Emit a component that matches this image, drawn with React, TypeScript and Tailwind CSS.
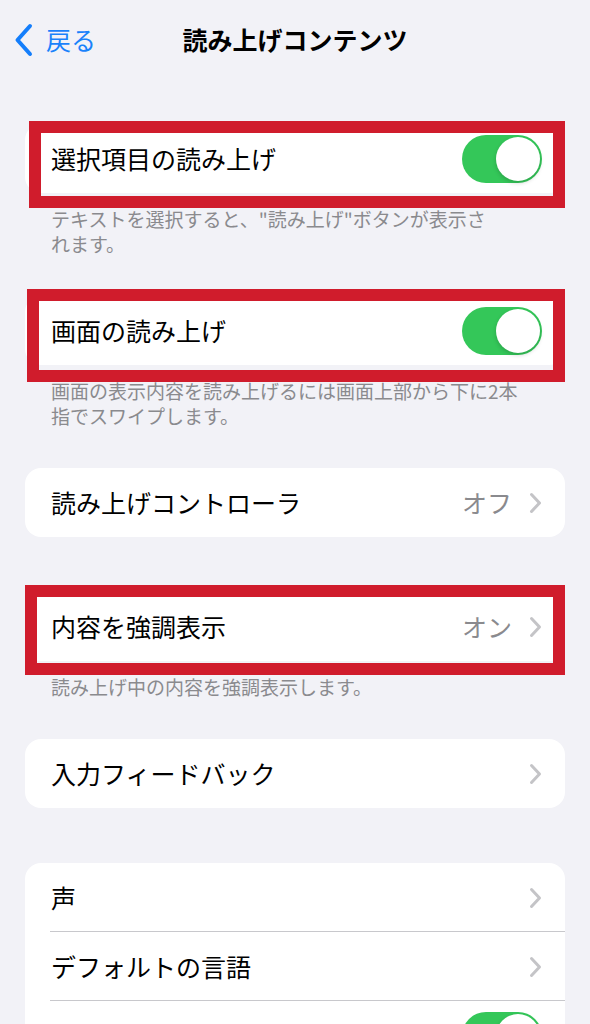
import React from "react";

const font = { fontFamily: '"Noto Sans CJK JP", "Noto Sans", sans-serif' };

const Toggle: React.FC = () => (
  <div className="flex h-[48px] w-[80px] items-center justify-end rounded-full bg-[#34c759] px-[2px]">
    <div className="h-[44px] w-[44px] rounded-full bg-white shadow-[0_2px_4px_rgba(0,0,0,0.18)]" />
  </div>
);

const Chevron: React.FC = () => (
  <svg width="13" height="22" viewBox="0 0 13 22" fill="none">
    <path
      d="M2.5 2.5 L10.5 11 L2.5 19.5"
      stroke="#c4c4c7"
      strokeWidth="3"
      strokeLinecap="round"
      strokeLinejoin="round"
    />
  </svg>
);

interface RowProps {
  label: string;
  value?: string;
  toggle?: boolean;
  divider?: boolean;
}

const Row: React.FC<RowProps> = ({ label, value, toggle, divider }) => (
  <div className="relative flex h-[69px] items-center justify-between pl-[26px] pr-[23px]">
    <span className="text-[25px] text-black">{label}</span>
    {toggle ? (
      <Toggle />
    ) : (
      <div className="flex items-center gap-[17px]">
        {value && <span className="text-[25px] text-[#8a8a8e]">{value}</span>}
        <Chevron />
      </div>
    )}
    {divider && (
      <div className="absolute bottom-0 left-[25px] right-0 h-px bg-[#c8c8cc]" />
    )}
  </div>
);

// red annotation box drawn over a card
const Mark: React.FC<{ className: string }> = ({ className }) => (
  <div
    className={
      "pointer-events-none absolute border-[12px] border-[#d01c2c] " + className
    }
  />
);

const Caption: React.FC<{ children: React.ReactNode }> = ({ children }) => (
  <p className="pl-[26px] pt-[13px] text-[19px] leading-[25px] text-[#8a8a8e]">
    {children}
  </p>
);

export default function App() {
  return (
    <div className="min-h-[1024px] w-full bg-[#f2f2f7] px-[25px]" style={font}>
      {/* Nav */}
      <div className="-mx-[25px] grid h-[80px] grid-cols-[1fr_auto_1fr] items-center">
        <div className="flex items-center gap-[13px] pl-[14px]">
          <svg width="19" height="34" viewBox="0 0 19 34" fill="none">
            <path
              d="M16 3 L3.5 17 L16 31"
              stroke="#147efb"
              strokeWidth="4"
              strokeLinecap="round"
              strokeLinejoin="round"
            />
          </svg>
          <span className="text-[25px] text-[#1a82fb]">戻る</span>
        </div>
        <h1 className="text-[25px] font-bold text-black">読み上げコンテンツ</h1>
        <div />
      </div>

      {/* 選択項目の読み上げ */}
      <div className="relative mt-[44px] rounded-[16px] bg-white">
        <Row label="選択項目の読み上げ" toggle />
        <Mark className="-top-[3px] -bottom-[15px] left-[4px] right-0" />
      </div>
      <Caption>
        テキストを選択すると、"読み上げ"ボタンが表示さ
        <br />
        れます。
      </Caption>

      {/* 画面の読み上げ */}
      <div className="relative mt-[40px] rounded-[16px] bg-white">
        <Row label="画面の読み上げ" toggle />
        <Mark className="-top-[7px] -bottom-[17px] left-[2px] right-0" />
      </div>
      <Caption>
        画面の表示内容を読み上げるには画面上部から下に2本
        <br />
        指でスワイプします。
      </Caption>

      {/* 読み上げコントローラ */}
      <div className="mt-[40px] overflow-hidden rounded-[16px] bg-white">
        <Row label="読み上げコントローラ" value="オフ" />
      </div>

      {/* 内容を強調表示 */}
      <div className="relative mt-[55px] rounded-[16px] bg-white">
        <Row label="内容を強調表示" value="オン" />
        <Mark className="-top-[7px] -bottom-[14px] left-0 right-0" />
      </div>
      <Caption>読み上げ中の内容を強調表示します。</Caption>

      {/* 入力フィードバック */}
      <div className="mt-[40px] overflow-hidden rounded-[16px] bg-white">
        <Row label="入力フィードバック" />
      </div>

      {/* 声 / 言語 */}
      <div className="mt-[55px] overflow-hidden rounded-[16px] bg-white">
        <Row label="声" divider />
        <Row label="デフォルトの言語" divider />
        <Row label="" toggle />
      </div>
    </div>
  );
}
